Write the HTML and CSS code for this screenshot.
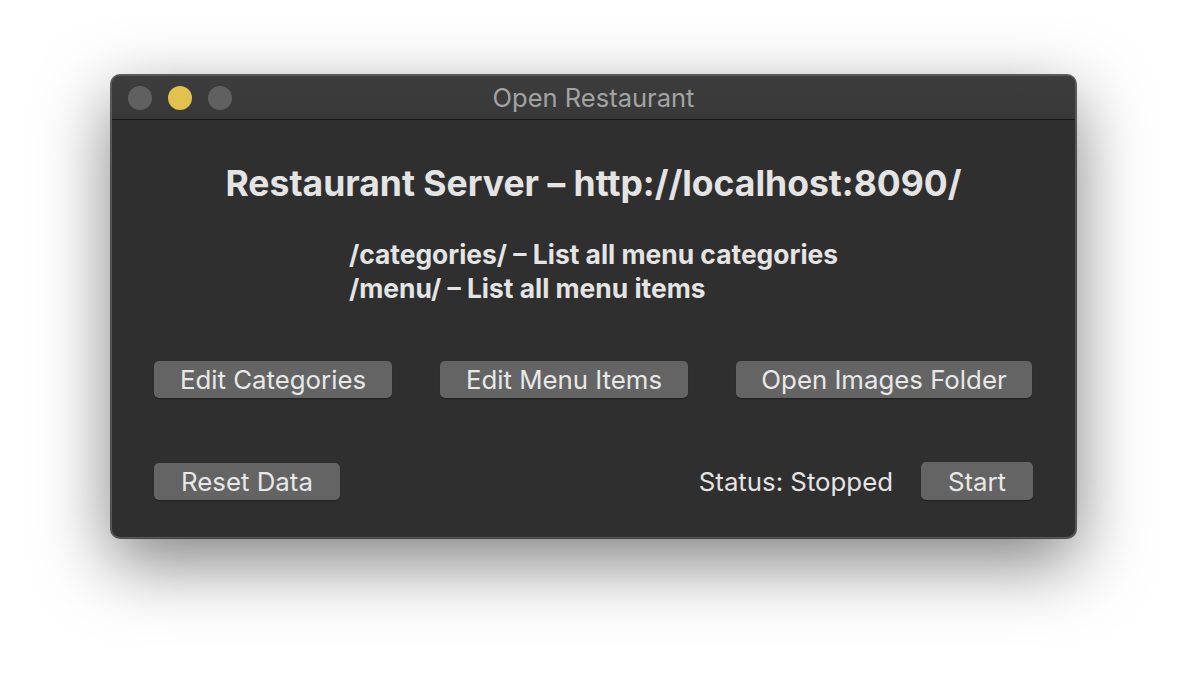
FILE: index.html
```html
<!DOCTYPE html>
<html>
<head>
<meta charset="utf-8">
<link rel="stylesheet" href="styles.css">
</head>
<body>
<div class="window">
  <div class="titlebar">
    <div class="lights">
      <span class="light grey"></span>
      <span class="light yellow"></span>
      <span class="light grey"></span>
    </div>
    <div class="title">Open Restaurant</div>
  </div>
  <div class="content">
    <h1 class="heading">Restaurant Server – http://localhost:8090/</h1>
    <div class="endpoints">
      <div>/categories/ – List all menu categories</div>
      <div>/menu/ – List all menu items</div>
    </div>
    <div class="row row-top">
      <button class="btn b-cat">Edit Categories</button>
      <button class="btn b-menu">Edit Menu Items</button>
      <button class="btn b-img">Open Images Folder</button>
    </div>
    <div class="row row-bottom">
      <button class="btn b-reset">Reset Data</button>
      <div class="status-group">
        <span class="status">Status: Stopped</span>
        <button class="btn b-start">Start</button>
      </div>
    </div>
  </div>
</div>
</body>
</html>
```
FILE: styles.css
```css
html, body {
  margin: 0;
  padding: 0;
  background: #ffffff;
  font-family: Inter, "Noto Sans", "Liberation Sans", sans-serif;
}
body {
  padding-top: 75px;
  padding-left: 111px;
  height: 686px;
  box-sizing: border-box;
  overflow: hidden;
}
.window {
  width: 965px;
  height: 463px;
  box-sizing: border-box;
  background: #2f2f2f;
  border: 1px solid #5a5a5a;
  border-radius: 9px;
  box-shadow: 0 24px 70px rgba(0,0,0,0.5), 0 0 0 1px rgba(0,0,0,0.6);
  overflow: hidden;
  display: flex;
  flex-direction: column;
}
.titlebar {
  position: relative;
  height: 43px;
  flex: none;
  background: linear-gradient(#3d3d3d, #383838);
  border-bottom: 1px solid #151515;
  display: flex;
  align-items: center;
}
.lights {
  display: flex;
  gap: 16px;
  padding-left: 16px;
}
.light {
  width: 24px;
  height: 24px;
  border-radius: 50%;
  display: block;
}
.light.grey { background: #606060; }
.light.yellow { background: #e2c14f; }
.title {
  position: absolute;
  left: 0;
  right: 0;
  top: 0;
  bottom: 0;
  display: flex;
  align-items: center;
  justify-content: center;
  color: #a3a3a3;
  font-size: 25.5px;
  pointer-events: none;
}
.content {
  flex: 1;
  display: flex;
  flex-direction: column;
  padding: 0 42px 0 42px;
}
.heading {
  margin: 44px 0 0 0;
  text-align: center;
  font-size: 35.5px;
  font-weight: 700;
  color: #e4e4e4;
  line-height: 40px;
}
.endpoints {
  margin: 33px auto 0 auto;
  font-size: 26.4px;
  font-weight: 700;
  color: #e4e4e4;
  line-height: 34px;
}
.row {
  display: flex;
  justify-content: space-between;
  align-items: center;
}
.row-top {
  margin-top: 56px;
  padding-right: 1px;
}
.row-bottom {
  margin-top: 64px;
}
.btn {
  font-family: inherit;
  font-size: 25.8px;
  color: #e8e8e8;
  background: #646464;
  border: none;
  border-radius: 5px;
  height: 37px;
  padding: 0;
  box-shadow: 0 1px 1px rgba(0,0,0,0.35);
  cursor: default;
}
.b-cat { width: 238px; }
.b-menu { width: 248px; }
.b-img { width: 296px; }
.b-reset { width: 186px; }
.b-start { width: 112px; height: 38px; }
.status-group {
  display: flex;
  align-items: center;
  gap: 28px;
}
.status {
  font-size: 25.8px;
  color: #e4e4e4;
}
```
